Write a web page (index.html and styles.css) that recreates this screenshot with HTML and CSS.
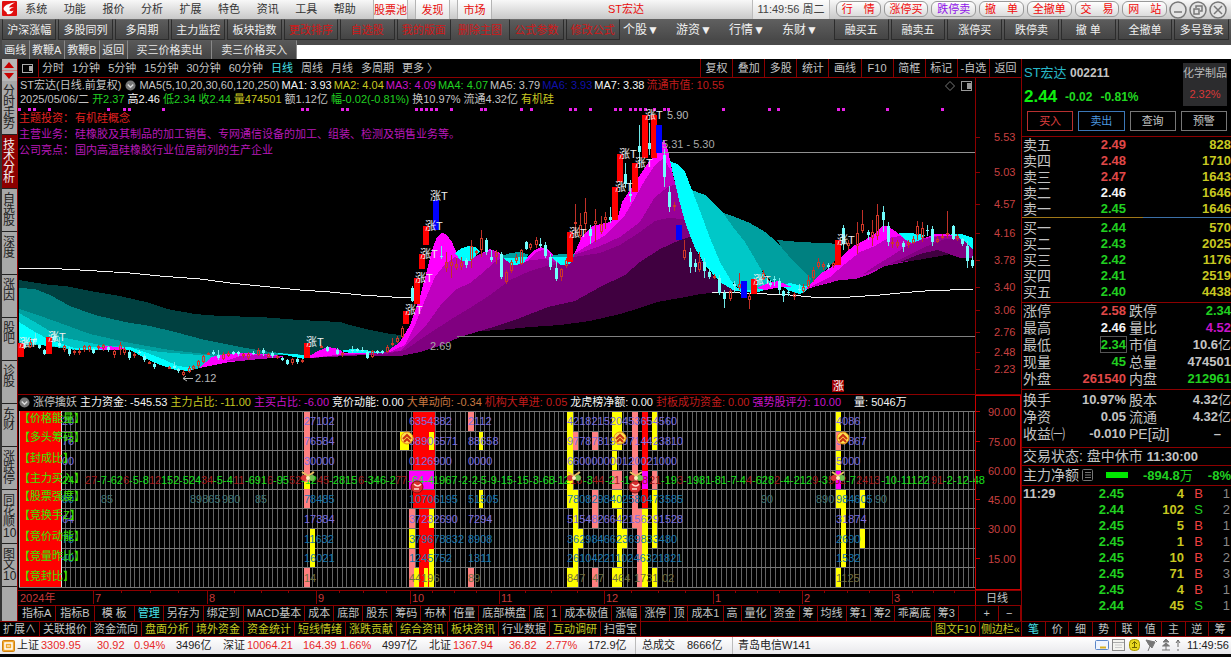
FILE: index.html
```html
<!DOCTYPE html>
<html lang="zh-CN">
<head>
<meta charset="utf-8">
<title>ST宏达 002211</title>
<link rel="stylesheet" href="styles.css">
</head>
<body>
<header class="menubar">
  <svg class="logo" viewBox="0 0 15 15" aria-hidden="true"><rect width="15" height="15" rx="1" fill="#e01010"/><path d="M13 1.500Q6 2.500 3 5Q0 8 3 10Q5 11 5 13Q10 14 11.500 9.500Q9 11 7.500 9.500Q7 8 12 6Q9 6 7 6.500Q8 4 13 1.500Z" fill="#fff"/></svg>
  <nav class="menus"><a href="#">系统</a><a href="#">功能</a><a href="#">报价</a><a href="#">分析</a><a href="#">扩展</a><a href="#">特色</a><a href="#">资讯</a><a href="#">工具</a><a href="#">帮助</a></nav>
  <div class="tags"><button>股票池</button><button>发现</button><button>市场</button></div>
  <div class="title">ST宏达</div>
  <div class="clock">11:49:56 周二</div>
  <div class="pills"><button>行&ensp;&ensp;情</button><button>涨停买</button><button class="violet">跌停卖</button><button>撤&ensp;&ensp;单</button><button>全撤单</button><button>交&ensp;&ensp;易</button><button>网&ensp;&ensp;站</button></div>
  <div class="window-buttons">
    <button aria-label="最小化"><svg viewBox="0 0 18 18"><circle cx="9" cy="9" r="8"/><path d="M5 11H13"/></svg></button>
    <button aria-label="还原"><svg viewBox="0 0 18 18"><circle cx="9" cy="9" r="8"/><path d="M7 7V5H13V10H11M5 8H10V13H5Z"/></svg></button>
    <button aria-label="关闭"><svg viewBox="0 0 18 18"><circle cx="9" cy="9" r="8"/><path d="M5 5L13 13M13 5L5 13"/></svg></button>
  </div>
</header>

<div class="tools">
  <div class="tool-group wide"><button>沪深涨幅</button><button>多股同列</button><button>多周期</button><button>主力监控</button><button>板块指数</button><button class="red">更改排序</button><button class="red">自选股</button><button class="red">我的版面</button><button class="red flat">删除主图</button><button class="red">公式参数</button><button class="red">修改公式</button></div>
  <div class="drops"><button>个股▼</button><button>游资▼</button><button>行情▼</button><button>东财▼</button></div>
  <div class="tool-group trade"><button>融买五</button><button>融卖五</button><button>涨停买</button><button>跌停卖</button><button>撤 单</button><button>全撤单</button><button>多号登录</button></div>
</div>
<div class="tools-extra">
  <div class="extra-group"><button>画线</button><button>教鞭A</button><button>教鞭B</button><button>返回</button><button class="long">买三价格卖出</button><button class="long">卖三价格买入</button></div>
</div>

<main class="main">
  <nav class="side">
    <div class="arrows"><svg viewBox="0 0 15 22" aria-hidden="true"><path d="M7 3L12 9H2Z M7 20L12 14H2Z" fill="#c80000"/><path d="M0 11.5H15" stroke="#c88"/></svg></div>
    <a href="#">分时走势</a><a href="#" class="on">技术分析</a><a href="#">自选股</a><a href="#">深度</a><a href="#">涨因</a><a href="#">股吧</a><a href="#">诊股</a><a href="#">东财</a><a href="#">涨跌停</a><a href="#">同花顺10</a><a href="#">图文10</a>
    <div class="side-end"></div>
  </nav>

  <section class="center">
    <div class="periods">
      <div class="period-icon"><svg viewBox="0 0 12 10" aria-hidden="true"><rect x=".5" y=".5" width="10" height="8" fill="none" stroke="#aaa"/><rect x="7" y="2" width="3" height="5" fill="#aaa"/></svg></div>
      <nav class="period-list"><a href="#">分时</a><a href="#">1分钟</a><a href="#">5分钟</a><a href="#">15分钟</a><a href="#">30分钟</a><a href="#">60分钟</a><a href="#" class="on">日线</a><a href="#">周线</a><a href="#">月线</a><a href="#">多周期</a><a href="#">更多 〉</a></nav>
      <div class="period-tools"><button>复权</button><button>叠加</button><button>多股</button><button>统计</button><button>画线</button><button>F10</button><button>简框</button><button>标记</button><button>-自选</button><button>返回</button></div>
    </div>
    <div class="chart-head">
      <div class="readout">
        <p class="ma"><span>ST宏达(日线.前复权)</span><svg class="dial" viewBox="0 0 12 12"><circle cx="6" cy="6" r="5.5" fill="#777"/><path d="M3 5L6 8L9 5" fill="none" stroke="#ddd" stroke-width="1.5"/></svg><span>MA5(5,10,20,30,60,120,250)</span><span class="w">MA1: 3.93</span><span class="y">MA2: 4.04</span><span class="m">MA3: 4.09</span><span class="g">MA4: 4.07</span><span>MA5: 3.79</span><span class="b">MA6: 3.93</span><span class="w">MA7: 3.38</span><span class="r">流通市值: 10.55</span><svg class="corner" viewBox="0 0 28 12"><path d="M5 1.5L9.500 6L5 10.500L.5 6Z" fill="none" stroke="#777"/><rect x="16.500" y="1.500" width="10" height="9" fill="none" stroke="#999"/><rect x="22" y="3" width="4" height="6" fill="#999"/></svg></p>
        <p class="quote"><span>2025/05/06/二</span><span class="g">开2.37</span><span class="w">高2.46</span><span class="g">低2.34</span><span class="g">收2.44</span><span class="y">量474501</span><span>额1.12亿</span><span class="g">幅-0.02(-0.81%)</span><span>换10.97%</span><span>流通4.32亿</span><span class="y">有机硅</span></p>
      </div>
      <div class="axis-top"></div>
    </div>
    <svg class="plot" id="price" viewBox="18 106 1003 288" role="img" aria-label="日线图"></svg>
    <div class="ind-head">
      <div class="ind-read"><svg class="dial" viewBox="0 0 12 12"><circle cx="6" cy="6" r="5.5" fill="#777"/><path d="M3 5L6 8L9 5" fill="none" stroke="#ddd" stroke-width="1.5"/></svg><span>涨停擒妖</span><span class="w">主力资金: -545.53</span><span class="y">主力占比: -11.00</span><span class="m">主买占比: -6.00</span><span class="w">竞价动能: 0.00</span><span class="o">大单动向: -0.34</span><span class="r">机构大单进: 0.05</span><span class="w">龙虎榜净额: 0.00</span><span class="r">封板成功资金: 0.00</span><span class="m">强势股评分: 10.00</span><span class="w last">量: 5046万</span></div>
      <div class="axis-top boxed"></div>
    </div>
    <svg class="plot" id="grid" viewBox="18 410 1003 195" role="img" aria-label="指标图"></svg>
    <div class="ind-tabs">
      <nav><a href="#">指标A</a><a href="#">指标B</a><a href="#">&nbsp;模 板&nbsp;</a><a href="#" class="on">管理</a><a href="#">另存为</a><a href="#">绑定到</a><a href="#">MACD基本</a><a href="#">成本</a><a href="#">底部</a><a href="#">股东</a><a href="#">筹码</a><a href="#">布林</a><a href="#">倍量</a><a href="#">底部横盘</a><a href="#">底</a><a href="#">1</a><a href="#">成本极值</a><a href="#">涨幅</a><a href="#">涨停</a><a href="#">顶</a><a href="#">成本1</a><a href="#">高</a><a href="#">量化</a><a href="#">资金</a><a href="#">筹</a><a href="#">均线</a><a href="#">筹1</a><a href="#">筹2</a><a href="#">乖离底</a><a href="#">筹3</a></nav>
      <div class="zoomer"><button>+</button><button>−</button></div>
    </div>
  </section>

  <nav class="bottom-tabs"><a href="#">扩展∧</a><a href="#">关联报价</a><a href="#">资金流向</a><a href="#" class="y">盘面分析</a><a href="#" class="y">境外资金</a><a href="#" class="y">资金统计</a><a href="#" class="y">短线情绪</a><a href="#" class="y">涨跌贡献</a><a href="#" class="y">综合资讯</a><a href="#" class="y">板块资讯</a><a href="#">行业数据</a><a href="#" class="y">互动调研</a><a href="#">扫雷宝</a><a href="#" class="y far">图文F10</a><a href="#" class="y">侧边栏«</a></nav>

  <aside class="panel">
    <div class="stock">
      <div>
        <h1><span>ST宏达</span> 002211</h1>
        <p class="price"><b>2.44</b><span>-0.02</span><span>-0.81%</span></p>
      </div>
      <div class="sector">化学制品<em>2.32%</em></div>
    </div>
    <div class="acts"><button class="buy">买入</button><button class="sell">卖出</button><button>查询</button><button>预警</button></div>
    <table class="book asks">
      <tr><th>卖五</th><td class="up">2.49</td><td>828</td></tr>
      <tr><th>卖四</th><td class="up">2.48</td><td>1710</td></tr>
      <tr><th>卖三</th><td class="up">2.47</td><td>1643</td></tr>
      <tr><th>卖二</th><td class="w">2.46</td><td>1646</td></tr>
      <tr><th>卖一</th><td class="g">2.45</td><td>1646</td></tr>
    </table>
    <div class="split"></div>
    <table class="book bids">
      <tr><th>买一</th><td class="g">2.44</td><td>570</td></tr>
      <tr><th>买二</th><td class="g">2.43</td><td>2025</td></tr>
      <tr><th>买三</th><td class="g">2.42</td><td>1176</td></tr>
      <tr><th>买四</th><td class="g">2.41</td><td>2519</td></tr>
      <tr><th>买五</th><td class="g">2.40</td><td>4438</td></tr>
    </table>
    <table class="stats">
      <tr><th>涨停</th><td class="up">2.58</td><th>跌停</th><td class="g">2.34</td></tr>
      <tr><th>最高</th><td class="w">2.46</td><th>量比</th><td class="m">4.52</td></tr>
      <tr><th>最低</th><td class="g"><span class="framed">2.34</span></td><th>市值</th><td>10.6<i>亿</i></td></tr>
      <tr><th>现量</th><td class="g">45</td><th>总量</th><td>474501</td></tr>
      <tr><th>外盘</th><td class="up">261540</td><th>内盘</th><td class="g">212961</td></tr>
    </table>
    <table class="stats capital">
      <tr><th>换手</th><td>10.97%</td><th>股本</th><td>4.32<i>亿</i></td></tr>
      <tr><th>净资</th><td>0.05</td><th>流通</th><td>4.32<i>亿</i></td></tr>
      <tr><th>收益㈠</th><td>-0.010</td><th>PE[动]</th><td class="dash">–</td></tr>
    </table>
    <p class="state">交易状态: 盘中休市 <b>11:30:00</b></p>
    <p class="flow"><span>主力净额</span><svg viewBox="0 0 12 12"><rect x=".5" y=".5" width="10" height="11" rx="1" fill="none" stroke="#777"/><path d="M3 3.500H9M3 6H9M3 8.500H9" stroke="#777"/></svg><i class="bar"></i><b>-894.8<span>万</span></b><b>-8%</b></p>
    <table class="ticks">
      <tr><th>11:29</th><td class="g">2.45</td><td>4</td><td class="s b1">B</td><td>1</td></tr>
      <tr><th></th><td class="g">2.44</td><td>102</td><td class="s g">S</td><td>2</td></tr>
      <tr><th></th><td class="g">2.45</td><td>5</td><td class="s b1">B</td><td>1</td></tr>
      <tr><th></th><td class="g">2.45</td><td>1</td><td class="s b1">B</td><td>1</td></tr>
      <tr><th></th><td class="g">2.45</td><td>10</td><td class="s b1">B</td><td>2</td></tr>
      <tr><th></th><td class="g">2.45</td><td>71</td><td class="s b1">B</td><td>3</td></tr>
      <tr><th></th><td class="g">2.45</td><td>4</td><td class="s b1">B</td><td>1</td></tr>
      <tr><th></th><td class="g">2.44</td><td>45</td><td class="s g">S</td><td>1</td></tr>
    </table>
    <nav class="panel-tabs"><a href="#" class="on">笔</a><a href="#">价</a><a href="#">细</a><a href="#">势</a><a href="#">联</a><a href="#">值</a><a href="#">主</a><a href="#">逆</a><a href="#">筹</a></nav>
  </aside>
</main>

<footer class="status">
  <svg class="coin" viewBox="0 0 13 12"><rect x=".5" y=".5" width="12" height="11" rx="1" fill="#f0a830" stroke="#d08010"/><path d="M3 3H10V9H3Z" fill="none" stroke="#fff" stroke-width="1.500"/><path d="M5 6H8" stroke="#fff"/></svg>
  <div class="index"><span>上证</span><span>3309.95</span><span>30.92</span><span>0.94%</span><span>3496亿</span></div>
  <div class="index"><span>深证</span><span>10064.21</span><span>164.39</span><span>1.66%</span><span>4997亿</span></div>
  <div class="index"><span>北证</span><span>1367.94</span><span>36.82</span><span>2.77%</span><span>172.9亿</span></div>
  <div class="total"><span>总成交</span><span>8666亿</span></div>
  <div class="server">青岛电信W141</div>
  <div class="tray">
    <svg class="icons" viewBox="0 0 88 14" aria-hidden="true"><rect x=".5" y="2.500" width="13" height="9" rx="1" fill="#eef4ff" stroke="#5a86c8"/><path d="M5 9.500H11" stroke="#d8b020" stroke-width="2"/><rect x="17.500" y="1.500" width="12" height="11" fill="#f4f4f0" stroke="#888"/><path d="M18 4.500H29" stroke="#aaa"/><path d="M20 7H27M20 9.500H27" stroke="#ccc"/><rect x="34.500" y="1.500" width="10" height="11" rx="4" fill="#e8d820" stroke="#a89800"/><path d="M37 6L39.500 3.500L42 6M37 9.500H42M39.500 4V10" fill="none" stroke="#6a6000"/><path d="M51 2L60 4L57 10L54 7ZM55 8L53 13M60 2L62 4" fill="#777" stroke="#777"/><path d="M71 1L74 4H68ZM71 5L74.500 8H67.500ZM67 12H75M71 7V12" fill="#777" stroke="#777"/><path d="M83 2V9M81 5L83 2L85 5M83 11V13" fill="none" stroke="#666"/></svg>
    <time>11:49:56</time>
  </div>
</footer>
<script src="chart.js"></script>
</body>
</html>
```
FILE: styles.css
```css
* { box-sizing: border-box; }
body, p, h1 { margin: 0; }
body {
  min-height: 100vh;
  background: #050505;
  color: #c4c4c4;
  font: 11px/16px "Liberation Sans", "Noto Sans CJK SC", sans-serif;
  white-space: nowrap;
}
a { color: inherit; text-decoration: none; }
button { margin: 0; padding: 0; border: 0; background: none; color: inherit; font: inherit; white-space: nowrap; }
svg { display: block; flex: none; }
table { width: 100%; border-collapse: collapse; border-spacing: 0; }
th, td { padding: 0; }
.w { color: #f4f4f4; }
.y { color: #c8c820; }
.m { color: #c814c8; }
.g { color: #20d020; }
.r { color: #c01c1c; }
.b { color: #1010a8; }
.o { color: #c87840; }

/* menu bar */
.menubar { display: flex; height: 19px; line-height: 18px; background: linear-gradient(#f8f8f8, #c8c8c8); color: #333; }
.logo { width: 15px; height: 15px; margin: 1px 0 0 2px; }
.menus { display: flex; flex: 347 1 0; }
.menus a { flex: 1; text-align: center; }
.tags { display: flex; flex: 119 1 0; gap: 7px; padding-left: 9px; }
.tags button { flex: 1; border: solid #b4b4b4; border-width: 0 1px; background: linear-gradient(#fff, #e4e4e4); color: #e80c0c; }
.title { flex: 252 1 0; padding-left: 8px; text-align: center; color: #e80c0c; }
.clock { flex: 76 1 0; text-align: center; border: solid #bbb; border-width: 0 1px; background: linear-gradient(#fdfdfd, #ddd); color: #444; }
.pills { display: flex; flex: 331 1 0; gap: 3px; padding: 1px 2px 2px 6px; }
.pills button { flex: 1; height: 16px; line-height: 14px; border: 1px solid #999; border-radius: 6px; background: linear-gradient(#fff, #dcdcdc); color: #f00808; }
.pills .violet { color: #9010e8; }
.window-buttons { display: flex; flex: none; gap: 2px; padding-right: 4px; }
.window-buttons svg { width: 18px; height: 18px; fill: #e4e4e4; stroke: #777; stroke-width: 1.5; }

/* toolbars */
.tools { display: flex; height: 21px; padding: 0 2px; background: linear-gradient(#606060, #484848); color: #f0f0f0; }
.tool-group { display: flex; gap: 2px; }
.wide { flex: 618 1 0; }
.trade { flex: 395 1 0; }
.tool-group button { flex: 1; border: 1px solid #2c2c2c; border-top-color: #6c6c6c; background: linear-gradient(#5c5c5c, #444); }
.tool-group .red { color: #d01818; }
.tool-group .flat { border-color: transparent; background: none; }
.drops { display: flex; flex: 195 1 0; justify-content: space-between; padding: 0 16px 0 3px; font-size: 12px; }
.tools-extra { height: 19px; background: linear-gradient(#4a4a4a 5px, #fff 5px); color: #e8e8e8; }
.extra-group { display: flex; width: 297px; height: 19px; padding-left: 2px; background: #484848; }
.extra-group button { flex: auto; border-right: 1px solid #888; border-top: 1px solid #5a5a5a; background: linear-gradient(#585858, #444); }
.extra-group .long { flex-basis: 80px; }

/* main frame */
.main { display: grid; grid-template-columns: 18px 1fr 210px; grid-template-rows: 1fr auto; background: #000; }
.side { display: flex; flex-direction: column; padding-left: 2px; background: #333; border-right: 1px solid #8c0000; color: #222; font-size: 12px; line-height: 11px; }
.arrows { background: #b8b8b8; }
.side a { min-height: 43px; padding: 5px 1px 4px; border-bottom: 1px solid #222; background: #a8a8a8; white-space: normal; }
.side .on { background: #8c0000; color: #f0f0f0; }
.side-end { flex: 1; background: #a8a8a8; }
.center { min-width: 0; }
.periods { display: flex; height: 19px; line-height: 18px; border: solid #8c0000; border-width: 0 0 1px; }
.period-icon { width: 21px; padding: 5px 4px; border-right: 1px solid #8c0000; }
.period-icon svg { width: 12px; height: 10px; }
.period-list { display: flex; gap: 8px; padding-left: 3px; }
.on { color: #48e0e8; }
.period-tools { display: flex; width: 32%; margin-left: auto; }
.period-tools button { flex: 1; border-left: 1px solid #8c0000; }
.chart-head, .ind-head { display: grid; grid-template-columns: 957fr 46fr; }
.readout { line-height: 14px; }
.readout p { display: flex; padding-left: 2px; }
.ma { gap: 2px; }
.ma .dial { margin: 2px 1px 0 2px; }
.quote { gap: 3px; }
.dial { width: 11px; height: 11px; margin-top: 2px; }
.corner { width: 28px; height: 12px; margin: 2px 2px 0 auto; }
.axis-top { border-left: 1px solid #8c0000; }
.boxed { border: solid #c80000; border-width: 1px 1px 0; }
.plot { width: 100%; height: auto; overflow: visible; font-size: 11px; }
.ind-head { border-top: 1px solid #8c0000; line-height: 15px; }
.ind-read { display: flex; gap: 3px; padding-left: 1px; }
.last { margin-left: 10px; }
.ind-tabs { display: grid; grid-template-columns: 957fr 46fr; border-top: 1px solid #8c0000; line-height: 15px; }
.ind-tabs nav, .bottom-tabs { display: flex; }
.ind-tabs a { padding: 0 3px; border-right: 1px solid #8c0000; }
.ind-tabs nav a:nth-child(-n+3) { padding: 0 4px; }
.zoomer { display: flex; border-left: 1px solid #8c0000; }
.zoomer button { flex: 1; border-right: 1px solid #8c0000; }
.bottom-tabs { grid-column: 1 / 3; border: solid #8c0000; border-width: 1px 0; line-height: 14px; }
.bottom-tabs a { padding: 0 3px; border-right: 1px solid #8c0000; }
.bottom-tabs .far { margin-left: auto; border-left: 1px solid #8c0000; }
.bottom-tabs a:last-child { padding: 0 1px; border-right: 0; }

/* quote panel */
.panel { grid-column: 3; grid-row: 1 / 3; display: flex; flex-direction: column; border-left: 1px solid #8c0000; font-size: 13px; }
.stock { display: flex; justify-content: space-between; padding: 4px 4px 0 2px; }
.stock h1 { font: bold 12px/20px "Liberation Sans", "Noto Sans CJK SC", sans-serif; }
.stock h1 span { color: #28b8c8; font-weight: 400; font-size: 13px; }
.price { display: flex; gap: 8px; align-items: center; color: #20d820; font-size: 12px; font-weight: bold; line-height: 28px; }
.price b { color: #10f010; font-size: 17px; }
.sector { width: 44px; height: 43px; background: #2c2c2e; color: #bbb; font-size: 11px; line-height: 21px; text-align: center; }
.sector em { display: block; font-style: normal; color: #d83838; }
.acts { display: flex; gap: 5px; padding: 0 4px 5px 5px; }
.acts button { flex: 1; height: 20px; border: 1px solid #777; font-size: 11px; line-height: 18px; }
.acts .buy { border-color: #b83030; color: #e04040; }
.acts .sell { border-color: #3c78b8; color: #4c98e0; }
.panel table { border-top: 1px solid #8c0000; font-weight: bold; }
.panel th { font-weight: 400; font-size: 14px; text-align: left; }
.panel td { text-align: right; }
.panel i { font-style: normal; font-weight: 400; }
.panel .up { color: #e04848; }
.panel tr { height: 16px; }
.book th { width: 50px; padding-left: 1px; }
.book td:nth-child(2) { width: 54px; }
.book td:last-child { color: #c8c820; }
.split { height: 1px; background: linear-gradient(90deg, #a07818 58%, #3c70a8 58%); }
.panel .bids { border-top: 0; margin: 2px 0; }
.stats { table-layout: fixed; margin-bottom: 1px; }
.panel .stats tr { height: 17px; }
.stats th:first-child { width: 45px; padding-left: 1px; }
.stats td:nth-child(2) { width: 59px; }
.stats th:nth-child(3) { width: 40px; padding-left: 3px; }
.framed { outline: 1px solid #555; }
.stats .dash { padding-right: 10px; }
.capital { padding-top: 2px; margin-bottom: 4px; border-collapse: separate; }
.state, .flow { border-top: 1px solid #8c0000; font-size: 14px; line-height: 17px; padding-left: 1px; }
.state b { font-size: 13px; }
.flow { display: flex; align-items: center; line-height: 19px; color: #20d020; font-size: 13px; }
.flow > span { color: #c4c4c4; font-size: 14px; }
.flow b span { font-weight: 400; }
.flow svg { width: 12px; height: 12px; margin-left: 3px; }
.bar { width: 22px; height: 6px; margin-left: 12px; background: #00e800; }
.flow b { margin-left: auto; }
.ticks th { width: 50px; padding-left: 1px; }
.panel .ticks th { font-weight: bold; font-size: 13px; }
.ticks td:nth-child(2) { width: 52px; }
.ticks td:nth-child(3) { color: #c8c820; }
.ticks td:last-child { width: 28px; padding-right: 1px; color: #888; font-weight: 400; }
.ticks .s { width: 19px; font-weight: 400; }
.ticks .b1 { color: #f04040; }
.panel-tabs { display: grid; grid-template-columns: repeat(9, 1fr); margin-top: auto; border: solid #8c0000; border-width: 1px 0; font-size: 11px; line-height: 14px; text-align: center; }
.panel-tabs a + a { border-left: 1px solid #8c0000; }

/* status bar */
.status { display: flex; height: 17px; padding-left: 2px; background: linear-gradient(#fff, #e8e8ec); color: #222; line-height: 17px; }
.coin { width: 13px; height: 12px; margin: 3px 2px 0 0; }
.index { display: grid; grid-template-columns: 24px 56px 37px 42px 47px; color: #e82828; }
.index span:first-child, .index span:last-child { color: #222; }
.total { display: flex; gap: 12px; width: 98px; padding-left: 6px; border: solid #bbb; border-width: 0 1px; }
.server { padding-left: 5px; }
.tray { display: flex; gap: 4px; margin-left: auto; padding-right: 2px; }
.icons { width: 88px; height: 14px; margin-top: 1px; }
```
FILE: chart.js
```js
const NS = "http://www.w3.org/2000/svg";
function add(root, tag, attrs, text) {
  const el = document.createElementNS(NS, tag);
  for (const k in attrs) el.setAttribute(k, attrs[k]);
  if (text !== undefined) el.textContent = text;
  root.appendChild(el);
}
const price = document.getElementById("price");
const grid = document.getElementById("grid");
const poly = (fill, points) => add(price, "polygon", { points, fill, "shape-rendering": "crispEdges" });
const line = (root, x1, y1, x2, y2, stroke) => add(root, "line", { x1, y1, x2, y2, stroke, "shape-rendering": "crispEdges" });
const label = (root, x, y, fill, text) => add(root, "text", { x, y, fill }, text);

/* long average */
const white = points => add(price, "polyline", { points, fill: "none", stroke: "#f4f4f4", "shape-rendering": "crispEdges" });
white("18,268 62,269 80,270 130,273 160,276 200,279 230,283 260,286 300,290 330,292 361,295 392,297 420,297");

/* falling ribbons on the left */
const base = " 402,335 398,345 385,352 345,352 330,349 318,353 305,358 290,356 275,353 250,355 225,356 210,361 200,368 190,370 175,370 160,365 145,358 130,350 118,349 100,346 88,350 75,350 60,347 40,345 19,345";
poly("#004040", "19,280 50,285 65,286 90,291 120,296 150,303 167,309 195,314 220,316 260,317 300,320 340,322 350,325 370,330 390,334" + base);
const base2 = " 305,358 290,356 275,353 250,355 225,356 210,361 200,368 190,370 175,370 160,365 145,358 130,350 118,349 100,346 88,350 75,350 60,347 40,345 19,345";
poly("#008080", "19,288 35,289 50,295 70,306 95,315 125,322 150,326 175,332 205,340 240,347 270,352 306,355" + base2);
poly("#00a0a0", "19,309 35,314 60,323 90,334 130,343 170,350 205,354 240,355 270,355 306,356" + base2);
poly("#00c8c8", "19,313 40,325 60,337 100,345 130,347 160,352 200,355 220,356 210,361 200,368 190,370 175,370 160,365 145,358 130,350 118,349 75,350 40,345 19,345");
poly("#00ffff", "19,322 35,332 50,340 75,348 100,347 130,347 150,354 165,360 178,366 195,368 190,371 175,370 160,365 145,358 130,350 118,349 88,350 75,350 60,347 40,345 19,340");
poly("#00ffff", "275,353 290,354 306,355 304,359 290,356");
poly("#00ffff", "340,351 352,349 365,350 378,352 386,352 376,354 350,353");
poly("#ff00ff", "199,368 212,357 225,354 245,353 262,354 275,355 286,357 260,359 230,362");
poly("#c000c0", "225,361 240,356 262,355 286,357 260,359 240,361");
poly("#ff00ff", "96,348 108,346 125,348 120,350 104,350");

/* rising ribbons */
const floor = " 700,294 680,298 657,302 637,309 620,314 590,321 560,325 530,327 500,330 480,331 460,337 440,346 420,352 400,356 345,355 310,358";
poly("#ff00ff", "306,358 318,351 328,347 338,349 345,353 385,353 400,342 410,325 420,297 427,270 432,250 437,237 441,233 446,234 452,242 457,254 466,262 482,253 490,249 500,253 510,264 522,264 533,251 541,247 549,250 560,264 573,257 582,236 592,226 610,222 618,217 622,202 630,190 640,175 650,160 655,155 664,139 668,150 673,175 686,225 697,252 715,285" + floor);
poly("#c000c0", "345,354 385,354 405,345 415,325 425,300 435,277 445,264 455,257 466,261 480,254 492,250 503,256 515,265 525,263 536,252 545,249 560,264 574,254 590,244 604,236 615,225 625,215 635,198 645,180 655,165 664,158 673,175 686,225 697,252 715,285" + floor);
poly("#980098", "400,351 425,327 440,306 455,290 470,283 480,275 495,262 503,257 515,265 530,260 545,259 560,264 574,255 600,246 620,237 640,222 655,197 668,187 676,184 686,225 697,252 715,285" + floor);
poly("#800080", "385,354 405,350 430,333 450,320 470,308 490,295 510,280 530,271 550,265 560,264 574,257 600,253 620,245 640,232 655,221 668,218 684,219 697,252 715,285" + floor);
poly("#400040", "480,331 500,325 520,318 548,307 575,301 600,287 625,275 640,262 660,249 680,240 692,236 697,252 705,268 720,282 735,291 712,293 700,294 680,298 657,302 637,309 620,314 590,321 560,325 530,327 500,330");

/* cross-over lobes */
poly("#00ffff", "455,253 462,248 469,246 475,247 480,252 470,261 461,261");
poly("#00ffff", "502,257 515,257 528,257 523,264 512,265");
poly("#00a0a0", "501,256 510,253 520,252 529,255 526,257 504,258");
poly("#00ffff", "551,257 574,255 570,264 561,265");
poly("#00a0a0", "550,256 560,254 575,254 574,257 553,257");

/* falling ribbons on the right */
poly("#008080", "777,240 800,242 842,244 838,257 825,270 812,286 800,278 788,258");
poly("#00a0a0", "720,212 735,217 750,223 765,232 777,242 788,255 800,268 811,279 808,288 795,289 775,285 755,263");
poly("#00c8c8", "692,190 705,195 715,205 724,214 733,227 745,242 755,259 765,276 775,287 760,290 742,292 727,276 712,247");
poly("#00ffff", "670,161 677,164 685,172 692,190 700,211 710,238 720,262 730,279 737,288 748,290 775,287 755,293 735,291 720,282 705,265 695,248 686,225 679,200 674,178");
poly("#00ffff", "780,285 790,283 803,286 811,285 806,291 800,294 790,291");
poly("#ff00ff", "757,288 768,283 778,281 785,284 792,287 780,287 765,290");

/* right hill */
poly("#ff00ff", "806,289 820,274 835,265 845,253 855,245 865,240 875,234 882,226 888,226 895,231 903,237 912,241 920,240 935,234 945,234 955,235 965,236 973,248 973,258 960,258 948,254 920,259 900,263 885,266 870,274 855,279 840,280");
poly("#c000c0", "808,288 830,277 845,264 860,252 875,246 888,238 900,236 912,241 935,236 950,236 965,240 973,250 973,258 960,258 948,254 920,259 900,263 885,266 870,274 855,279 840,280");
poly("#980098", "862,275 875,266 890,257 905,247 920,240 940,236 960,236 973,250 973,258 960,258 948,254 920,259 900,263 885,266");
poly("#800080", "890,264 905,257 925,247 945,239 965,240 973,250 973,258 960,258 948,254 920,259");
poly("#400040", "900,262 920,254 937,250 950,254 935,257 918,260");
poly("#00ffff", "898,233 910,233 926,235 920,240 912,243 904,239");
poly("#00ffff", "950,234 962,234 973,238 973,250 964,240");

white("712,292 740,293 767,294 790,295 811,297 850,297 880,295 900,293 925,291 950,290 973,289");
line(price, 662, 152.5, 975, 152.5, "#909090");
line(price, 457, 336.5, 975, 336.5, "#808080");

/* candles: x, high, open, close, low */
const hollow = [[30,338,342,347,348],[64,345,346,350,352],[74,349,351,353,355],[79,348,351,353,355],[84,345,346,350,352],[89,345,346,350,352],[98,345,346,348,350],[103,344,345,348,351],[114,349,351,355,358],[120,342,345,350,355],[124,347,349,353,355],[134,352,354,356,358],[149,361,362,363,364],[169,366,367,368,369],[183,370,372,375,376],[189,366,368,372,373],[193,365,366,369,370],[198,360,361,366,368],[203,355,356,362,363],[208,352,353,354,355],[223,352,354,359,360],[228,351,353,356,357],[243,353,354,356,358],[248,352,354,358,360],[258,348,350,355,356],[268,353,354,357,358],[277,355,356,358,359],[292,358,359,363,365],[302,359,360,362,363],[321,345,346,347,348],[342,352,353,355,357],[372,350,351,357,358],[387,345,347,352,353],[392,338,343,345,346],[397,336,338,342,343],[402,326,328,337,338],[446,252,262,268,272],[451,255,262,266,278],[456,258,264,268,270],[461,257,262,267,270],[471,240,246,260,268],[476,250,251,253,255],[481,230,238,250,257],[496,250,252,257,264],[506,270,272,282,284],[511,260,262,271,273],[516,254,257,261,263],[521,249,250,264,265],[530,243,244,248,250],[536,237,240,245,248],[561,268,269,277,281],[566,258,260,266,268],[575,204,222,223,236],[580,213,225,236,240],[585,198,212,224,233],[595,209,221,224,242],[601,216,224,232,234],[605,212,217,220,229],[674,202,205,206,211],[684,240,250,258,260],[699,252,262,270,272],[714,274,276,278,279],[730,289,291,299,301],[739,273,284,288,290],[749,293,296,300,309],[763,270,273,279,280],[794,292,294,297,300],[803,284,287,291,293],[808,275,280,287,289],[813,267,270,278,282],[818,258,262,267,269],[823,262,264,267,270],[833,262,263,266,268],[848,240,243,246,250],[857,222,233,246,254],[862,210,224,231,233],[872,220,232,238,246],[877,204,215,236,240],[892,238,242,244,248],[897,240,242,246,248],[908,240,242,245,248],[913,236,239,243,244],[917,221,226,235,240],[922,222,228,238,242],[937,236,239,242,243],[942,234,236,238,239],[947,211,233,234,238],[957,234,236,239,241]];
const solid = [[24,341,344,347,349],[35,333,338,342,345],[39,344,345,348,349],[44,349,350,354,355],[54,331,336,340,342],[59,337,343,346,348],[69,347,349,354,356],[93,348,349,353,354],[108,346,347,350,352],[129,350,352,358,360],[139,350,352,353,354],[144,354,356,360,362],[154,362,364,367,369],[174,362,366,368,369],[178,368,369,371,373],[213,350,352,354,355],[218,350,355,358,360],[233,351,352,354,355],[238,351,352,354,356],[253,351,353,354,355],[263,348,350,353,356],[272,351,353,356,358],[282,357,358,360,361],[287,359,360,364,365],[297,358,359,362,364],[327,346,347,351,352],[337,348,350,354,355],[352,346,350,351,353],[357,348,349,351,352],[362,347,350,351,352],[367,350,352,358,359],[377,350,351,353,354],[382,350,351,353,354],[412,286,288,301,302],[441,246,256,257,259],[466,258,260,265,268],[486,238,240,252,255],[491,250,257,260,262],[501,252,254,277,279],[526,241,242,249,250],[540,238,244,246,248],[545,242,245,256,258],[550,254,257,267,270],[556,260,268,279,281],[571,250,253,256,257],[590,225,229,236,244],[610,207,217,220,223],[625,163,174,184,188],[630,180,194,196,202],[639,125,146,152,168],[649,123,143,149,155],[664,149,155,177,187],[669,186,192,207,212],[690,248,252,267,273],[695,259,263,267,272],[704,258,262,271,278],[709,268,272,277,279],[719,275,278,293,295],[724,290,293,299,308],[734,281,284,286,293],[770,280,283,285,287],[774,276,279,280,286],[779,278,281,290,294],[783,290,291,296,302],[788,290,292,293,296],[799,284,289,290,292],[828,263,265,267,270],[843,225,228,244,250],[868,230,232,235,240],[883,206,212,220,232],[888,222,226,242,246],[903,241,243,247,252],[927,225,230,231,236],[932,226,229,242,246],[953,225,226,239,240],[962,238,239,244,246],[967,241,246,261,268],[972,256,260,266,268]];
for (const [x, h, o, c, l] of hollow) {
  line(price, x + .5, h, x + .5, o, "#c03028");
  line(price, x + .5, c, x + .5, l, "#c03028");
  add(price, "rect", { x: x - .5, y: o + .5, width: 2, height: Math.max(1, c - o - 1), fill: "none", stroke: "#d03828", "shape-rendering": "crispEdges" });
}
for (const [x, h, o, c, l] of solid) {
  line(price, x + .5, h, x + .5, l, "#70e8e8");
  add(price, "rect", { x: x - 1, y: o, width: 3, height: c - o, fill: "#70ffff" });
}
/* limit-up and limit-down bars: x, top, bottom */
for (const [x, a, b] of [[18,343,357],[46,337,354],[304,343,358],[403,311,324],[414,278,304],[419,254,269],[423,226,245],[567,232,262],[612,187,220],[617,154,182],[632,163,192],[642,115,158],[651,115,158],[751,279,294],[835,240,265]])
  add(price, "rect", { x, y: a, width: 6, height: b - a, fill: "#ff0000" });
for (const [x, a, b] of [[433,200,230],[656,125,153],[676,225,240],[741,281,298]])
  add(price, "rect", { x, y: a, width: 6, height: b - a, fill: "#0000ff" });
for (const x of [18,28,33,48,107,123,128,162,301,306,341,346,415,420,425,430,435,450,480,484,520,530,569,574,589,614,619,629,634,639,644,653,663,667,722,768,777,837,842,886,941])
  add(price, "rect", { x, y: 108, width: 3, height: 3, fill: "#e820e8" });
for (const [x, y] of [[19,347],[48,341],[306,346],[405,314],[415,282],[420,258],[425,230],[430,200],[569,237],[615,191],[619,158],[635,167],[645,119],[753,284],[837,244]])
  label(price, x, y, "#f0f0f0", "涨T");
label(price, 667, 119, "#b8b8b8", "5.90");
label(price, 662, 148, "#a8a8a8", "5.31 - 5.30");
label(price, 430, 350, "#a8a8a8", "2.69");
label(price, 195, 382, "#b8b8b8", "2.12");
add(price, "path", { d: "M193 378.5H183M186 376L183 378.500L187 381", fill: "none", stroke: "#b8b8b8" });
label(price, 19, 122, "#e02020", "主题投资：");
label(price, 75, 122, "#e02020", "有机硅概念");
label(price, 19, 138, "#b818b8", "主营业务：");
label(price, 75, 138, "#b818b8", "硅橡胶及其制品的加工销售、专网通信设备的加工、组装、检测及销售业务等。");
label(price, 19, 154, "#b818b8", "公司亮点：");
label(price, 75, 154, "#b818b8", "国内高温硅橡胶行业位居前列的生产企业");
add(price, "rect", { x: 832, y: 380, width: 12, height: 12, fill: "#a00000" });
label(price, 833, 390, "#fff", "涨");
line(price, 975.5, 106, 975.5, 394, "#8c0000");
for (const [v, y] of [["5.53",137],["5.03",172],["4.57",204],["4.16",233],["3.78",260],["3.40",287],["3.06",310],["2.76",332],["2.48",352],["2.23",369]]) {
  line(price, 975, y + .5, 980, y + .5, "#8c0000");
  label(price, 994, y + 4, "#c84040", v);
}

/* indicator grid */
const rows = [411, 431, 450, 470, 489, 508, 528, 548, 567, 587];
for (let x = 61; x < 975; x += 4.93) line(grid, x, 411, x, 587, "#646464");
for (const y of rows) line(grid, 19, y + .5, 975, y + .5, "#777");
line(grid, 19.5, 411, 19.5, 587, "#bbb");
add(grid, "rect", { x: 20, y: 411, width: 41, height: 176, fill: "#ff0000" });
line(grid, 61.5, 411, 61.5, 587, "#ddd");
const P = "#ff8080", Y = "#ffff00", R = "#ff0000", M = "#ff00ff";
/* x, width, first row, last row, colour */
for (const [x, w, a, b, fill] of [
  [304,6,1,5,P],[310,5,7,8,Y],[304,6,9,9,P],
  [400,9,2,2,Y],[413,22,1,3,R],[429,5,2,2,Y],[409,25,4,4,M],[413,22,5,5,R],
  [409,6,6,6,P],[419,15,6,9,R],[429,5,6,6,Y],[409,6,7,7,Y],[409,6,8,9,P],[429,5,8,9,Y],[414,5,9,9,Y],[424,4,9,9,Y],
  [468,6,1,1,P],[468,6,9,9,P],[479,4,2,2,Y],[479,4,5,5,Y],
  [567,6,1,5,Y],[573,5,2,2,P],[573,5,5,9,Y],[578,5,7,7,Y],[567,6,9,9,Y],
  [592,6,2,2,P],[592,6,5,6,P],[592,6,9,9,P],
  [612,10,1,2,Y],[612,5,3,3,Y],[612,10,4,4,P],[612,10,5,5,Y],[617,5,6,8,Y],[622,5,7,7,Y],[612,10,9,9,Y],
  [632,6,1,6,P],[637,6,6,9,P],[642,6,1,5,R],[642,6,4,4,M],[642,6,6,9,Y],
  [652,5,1,2,Y],[652,5,4,4,P],[652,5,5,7,Y],[652,5,9,9,Y],
  [836,5,1,1,Y],[836,5,2,2,P],[836,5,3,3,Y],[836,5,4,4,M],[836,5,5,5,Y],[841,5,5,8,Y],[836,5,9,9,Y],[860,5,5,5,Y],[860,5,7,7,Y]
]) add(grid, "rect", { x, y: rows[a - 1] + 1, width: w, height: rows[b] - rows[a - 1] - 1, fill });
add(grid, "rect", { x: 304, y: 482, width: 6, height: 7, fill: Y });

/* figures of each row, keyed by the x where the cluster starts */
const baseline = [425, 445, 465, 484, 503, 523, 543, 562, 582];
const tint = ["#7c70e0", "#7c70e0", "#7c70e0", "#18e018", "#1878b0", "#7c70e0", "#1878b0", "#1878b0", "#707040"];
const blocks = {
  62: ["20", "76", "00", "24", "80", "64", "75", "40", ""],
  304: ["27102", "76584", "30000", "", "78485", "17384", "11632", "16021", "14"],
  409: ["6354382", "88906571", "0126900", "", "10706195", "37232690", "379678832", "1245752", "44196"],
  468: ["2112", "88658", "0000", "", "51505", "7294", "8908", "1311", "89"],
  567: ["421821520453654560", "9778781919714423810", "660000000120021000", "", "7808298402580473585", "5154826642156291528", "362984662369833480", "2610422110246321821", "847"],
  836: ["4086", "97867", "5000", "", "984605", "31874", "2690", "1532", "1125"]
};
for (const x in blocks) blocks[x].forEach((v, i) => { if (v) label(grid, x, baseline[i], tint[i], v); });
for (const [x, v] of [[592,"47"],[612,"464"],[634,"1731"],[662,"02"]]) label(grid, x, baseline[8], tint[8], v);
for (const [x, v] of [[101,"85"],[190,"89865"],[222,"980"],[255,"85"],[761,"90"],[816,"890"],[875,"90"]])
  label(grid, x, baseline[4], "#407878", v);
const flows = "27 -7 -62 6 -5 -8 12 152 -524 34 -5 -4 11 -691 6 -95 52 -12 45 -2 815 6 -346 -2 77 -64 -4 1967 -2 -2 -5 -9 -15 -15 -3 -68 -12 16 -3 44 -2 1 -12 98 21 -19 3 -1 981 -81 -7 -4 4 -628 2 -4 -212 9 -3 53 2 -7 24 13 -10 -1 1122 9 1 -2 -12 -48".split(" ");
let at = 85;
for (const v of flows) {
  label(grid, Math.round(at), baseline[3], v[0] === "-" || v.length > 2 ? "#18e018" : "#a01818", v);
  at += [...v].reduce((w, c) => w + (c === "-" ? 3.7 : 6.1), 0);
}

["价格能量", "多头筹码", "封成比", "主力买入", "股票强度", "竞换手Z", "竞价动能", "竞量昨比", "竞封比"].forEach((t, i) =>
  label(grid, 19, [422, 441, 462, 482, 500, 519, 540, 560, 580][i], "#38e800", "【" + t + "】"));

/* markers */
for (const [x, y] of [[407,438],[620,438],[843,438]]) {
  add(grid, "circle", { cx: x, cy: y, r: 6, fill: "#ffe050", stroke: "#e89010" });
  add(grid, "path", { d: `M${x - 4} ${y + 1}L${x} ${y - 3}L${x + 4} ${y + 1}M${x - 3} ${y + 4}L${x} ${y + 1}L${x + 3} ${y + 4}`, fill: "none", stroke: "#c83010", "stroke-width": 2 });
}
for (const [x, y] of [[308,477],[574,477],[636,477],[838,477]]) {
  add(grid, "path", { d: `M${x - 6} ${y - 5}L${x} ${y - 1}L${x + 6} ${y - 5}`, fill: "none", stroke: "#e8c060", "stroke-width": 2 });
  add(grid, "circle", { cx: x - 4, cy: y + 1, r: 3, fill: "#d83838" });
  add(grid, "circle", { cx: x + 4, cy: y + 1, r: 3, fill: "#70c050" });
  add(grid, "circle", { cx: x, cy: y + 1, r: 2, fill: "#fff0c0" });
}
for (const [x, y] of [[417,487],[635,487]]) {
  add(grid, "circle", { cx: x, cy: y, r: 6, fill: "#d83030", stroke: "#801010" });
  add(grid, "path", { d: `M${x - 3} ${y - 3}Q${x + 1} ${y + 1} ${x + 4} ${y - 3}M${x - 3} ${y + 2}L${x + 2} ${y + 2}`, fill: "none", stroke: "#ffe0d0", "stroke-width": 1.5 });
}

/* axes */
line(grid, 975.5, 410, 975.5, 605, "#c80000");
line(grid, 1020, 410, 1020, 590, "#c80000");
line(grid, 975, 589.5, 1021, 589.5, "#c80000");
line(grid, 18, 590.5, 1021, 590.5, "#8c0000");
for (const [v, y] of [["90.00",411],["75.00",441],["60.00",470],["45.00",499],["30.00",528],["15.00",558]]) {
  line(grid, 975, y + .5, 980, y + .5, "#c80000");
  label(grid, 988, y + 5, "#c84040", v);
}
label(grid, 20, 602, "#c83838", "2024年");
const months = [[93,"7"],[207,"8"],[316,"9"],[410,"10"],[499,"11"],[604,"12"],[713,"1"],[802,"2"],[892,"3"],[975,""]];
months.forEach(([x, t], i) => {
  if (!t) return;
  line(grid, x + .5, 591, x + .5, 604, "#8c0000");
  label(grid, x + 2, 602, "#c83838", t);
  const step = (months[i + 1][0] - x) / 4;
  for (let k = 1; k < 4; k++) line(grid, x + k * step, 591, x + k * step, 593, "#8c0000");
});
label(grid, 986, 602, "#c4c4c4", "日线");
```
